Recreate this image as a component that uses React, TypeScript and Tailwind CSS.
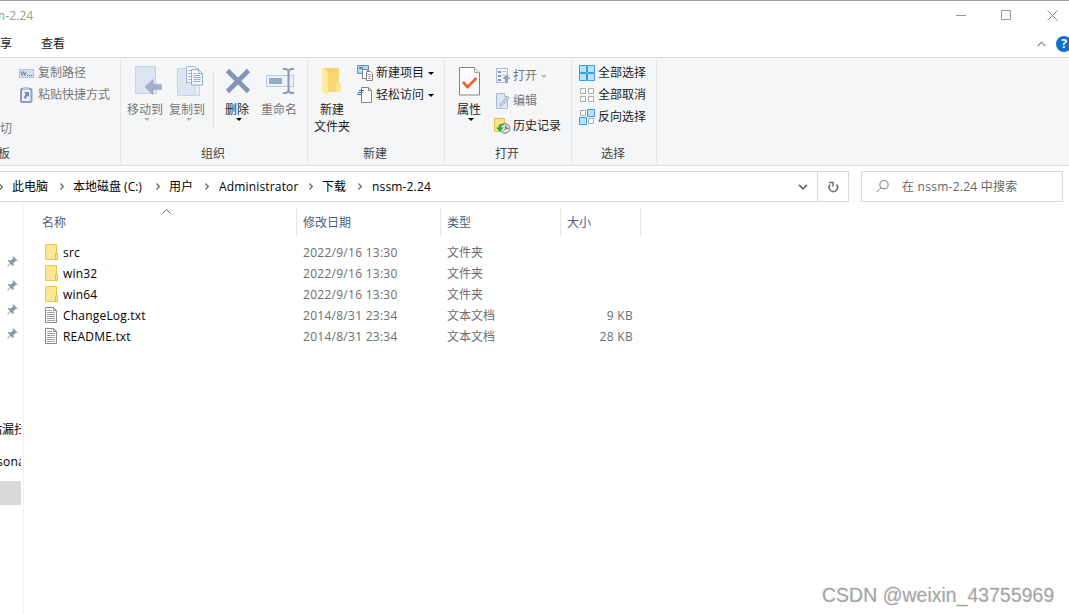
import React from 'react';

interface IconProps {
  className?: string;
}

const CRUMBS = [
  { label: '此电脑', width: 'w-[51px]' },
  { label: '本地磁盘 (C:)', width: 'w-[86px]' },
  { label: '用户', width: 'w-[39px]' },
  { label: 'Administrator', width: 'w-[94px]' },
  { label: '下载', width: 'w-[39px]' },
  { label: 'nssm-2.24', width: 'w-[70px]' },
];

const FILES = [
  { name: 'src', date: '2022/9/16 13:30', type: '文件夹', size: '', folder: true },
  { name: 'win32', date: '2022/9/16 13:30', type: '文件夹', size: '', folder: true },
  { name: 'win64', date: '2022/9/16 13:30', type: '文件夹', size: '', folder: true },
  { name: 'ChangeLog.txt', date: '2014/8/31 23:34', type: '文本文档', size: '9 KB', folder: false },
  { name: 'README.txt', date: '2014/8/31 23:34', type: '文本文档', size: '28 KB', folder: false },
];

const Arrow = ({ className = 'text-black' }: IconProps) => (
  <svg width="6" height="3" viewBox="0 0 6 3" className={className}>
    <path d="M0 0h6L3 3z" fill="currentColor" />
  </svg>
);

const CopyPathIcon = () => (
  <svg width="15" height="9" viewBox="0 0 15 9">
    <rect x=".5" y=".5" width="14" height="8" fill="#d5e0f0" stroke="#b3c3da" />
    <path d="M2 2.500l1.200 4 1.300-4 1.300 4 1.200-4" fill="none" stroke="#5c6f92" strokeWidth=".8" />
    <path d="M8 6h1v1H8zM10 6h1v1h-1zM12 6h1v1h-1z" fill="#5c6f92" />
  </svg>
);

const PasteShortcutIcon = () => (
  <svg width="14" height="16" viewBox="0 0 14 16">
    <rect x="2" y="2" width="10.500" height="13" rx="1" fill="#e9eff8" stroke="#8c9dbe" strokeWidth="2" />
    <path d="M4 0h6v3H4z" fill="#b9c6dc" />
    <path d="M5 5h5v5L8.400 8.400 6.500 12l-1.800-1L6.800 6.800z" fill="#7387ad" />
  </svg>
);

const MoveToIcon = () => (
  <svg width="27" height="30" viewBox="0 0 27 30">
    <path d="M.5.5h20v27H.5z" fill="#dce5f3" stroke="#c6d3e7" />
    <path d="M17.500 17h4v10.500h-4z" fill="#e5ecf7" stroke="#c6d3e7" />
    <path d="M10 21l8-7.500v5h8.500v5H18v5z" fill="#a1b0cc" stroke="#8fa0c0" strokeWidth=".6" />
  </svg>
);

const CopyToIcon = () => (
  <svg width="27" height="31" viewBox="0 0 27 31">
    <path d="M.5 2.500h21v27H.5z" fill="#dce5f3" stroke="#c6d3e7" />
    <path d="M18 18h4.500v11.500H18z" fill="#e5ecf7" stroke="#c6d3e7" />
    <path d="M9.500.5h8l3 3v13h-11z" fill="#f4f8fd" stroke="#a5b6d1" />
    <path d="M11 4.500h5M11 7.500h5M11 10.500h5M11 13.500h5" stroke="#a5b6d1" />
    <path d="M14.500 3.500h7l4 4v11.500h-11z" fill="#f4f8fd" stroke="#9aadcb" />
    <path d="M21.500 3.500v4h4" fill="none" stroke="#9aadcb" />
    <path d="M16.500 7.500h3M16.500 9.500h7M16.500 11.500h7M16.500 13.500h7M16.500 15.500h7" stroke="#9aadcb" />
  </svg>
);

const DeleteIcon = () => (
  <svg width="26" height="26" viewBox="0 0 26 26">
    <path d="M2.500 2.500l21 21M23.500 2.500l-21 21" stroke="#8394b5" strokeWidth="4.600" />
  </svg>
);

const RenameIcon = () => (
  <svg width="29" height="26" viewBox="0 0 29 26">
    <path d="M.5 7.500h27v11H.5z" fill="#edf3fb" stroke="#b7c7df" />
    <path d="M3 10h13v6H3z" fill="#99aac8" />
    <path d="M17 1h3l2.500 1.500L25 1h3M17 25h3l2.500-1.500L25 25h3M22.500 2v22" fill="none" stroke="#8799b9" strokeWidth="2" />
  </svg>
);

const NewFolderIcon = () => (
  <svg width="20" height="29" viewBox="0 0 20 29">
    <path d="M2 1h15v15h2v9H5z" fill="#f5d066" />
    <path d="M0 1h2l4 5v22.500L0 25z" fill="#ffe9a4" />
    <path d="M6 6l11-5v15l2 1v8H6z" fill="#f8d775" />
    <path d="M14 16h5v9h-5z" fill="#ffe398" />
  </svg>
);

const NewItemIcon = () => (
  <svg width="16" height="16" viewBox="0 0 16 16">
    <path d="M.5.5h11v8H.5z" fill="#b9dcf5" stroke="#6a8ba5" />
    <path d="M2 2h4v2H2z" fill="#4e88b8" />
    <path d="M5.500 4.500h5v9h-5z" fill="#fff" stroke="#858585" />
    <path d="M9.500 6.500h4l2 2v7h-6z" fill="#fff" stroke="#858585" />
    <path d="M11 9.500h3M11 11.500h3M11 13.500h3" stroke="#b19a9a" />
  </svg>
);

const EasyAccessIcon = () => (
  <svg width="16" height="16" viewBox="0 0 16 16">
    <path d="M4.500.5h7l3 3v12h-10z" fill="#fff" stroke="#858585" />
    <path d="M11.500.5v3h3" fill="none" stroke="#858585" />
    <path d="M2 3.500h5M1 5.500h5M0 7.500h4" stroke="#2f6d9f" />
  </svg>
);

const PropertiesIcon = () => (
  <svg width="22" height="29" viewBox="0 0 22 29">
    <path d="M.5.5h15l5 5v22.500H.5z" fill="#fcfcfc" stroke="#858585" />
    <path d="M15.500.5v5h5" fill="#eee" stroke="#a5a5a5" />
    <path d="M4 15l4.500 5L17.500 11" fill="none" stroke="#f16522" strokeWidth="2.700" />
  </svg>
);

const OpenIcon = () => (
  <svg width="15" height="16" viewBox="0 0 15 16">
    <path d="M.5.5h11v14H.5z" fill="#edf3fb" stroke="#a9bad5" />
    <path d="M2 3h3v2H2zM2 7h3v2H2zM2 11h3v2H2z" fill="#8699bd" />
    <path d="M6 3.500h4M6 7.500h3" stroke="#b4c3dc" />
    <path d="M10.500 6.500L14.500 11H12v4H9v-4H6.500z" fill="#8fa1c2" />
  </svg>
);

const EditIcon = () => (
  <svg width="15" height="16" viewBox="0 0 15 16">
    <path d="M1.500.5h8l3 3v12h-11z" fill="#dce7f5" stroke="#a9bad5" />
    <path d="M9.500.5v3h3" fill="#fff" stroke="#a9bad5" />
    <path d="M4.500 13.500l1-3 7-7 1.800 1.800-7 7z" fill="#c9d6e9" stroke="#98a9c6" strokeWidth=".8" />
  </svg>
);

const HistoryIcon = () => (
  <svg width="17" height="16" viewBox="0 0 17 16">
    <path d="M.5.5h10v13H.5z" fill="#ffe48c" stroke="#e5bf49" />
    <circle cx="11" cy="10.500" r="4.800" fill="#ddd" stroke="#777" />
    <path d="M11.500 7.500v3h3M9.500 12.500l4-4" fill="none" stroke="#666" strokeWidth=".8" />
    <path d="M10 5.500C6 5 4 7.500 4.500 9.500H2l3.800 4.500 3.700-4.500H7.300C7 8 8 7 10 7z" fill="#2eb135" />
  </svg>
);

const SelectAllIcon = () => (
  <svg width="16" height="16" viewBox="0 0 16 16" fill="#b9e2fc" stroke="#369ce5">
    <path d="M.5.5h7v7h-7zM8.500.5h7v7h-7zM.5 8.500h7v7h-7zM8.500 8.500h7v7h-7z" />
  </svg>
);

const SelectNoneIcon = () => (
  <svg width="16" height="16" viewBox="0 0 16 16" fill="#fff" stroke="#aaa">
    <path d="M1.500 1.500h5v5h-5zM9.500 1.500h5v5h-5zM1.500 9.500h5v5h-5zM9.500 9.500h5v5h-5z" />
  </svg>
);

const InvertIcon = () => (
  <svg width="16" height="16" viewBox="0 0 16 16">
    <path d="M1.500 1.500h5v5h-5zM9.500 9.500h5v5h-5z" fill="#fff" stroke="#aaa" />
    <path d="M8.500.5h7v7h-7zM.5 8.500h7v7h-7z" fill="#b9e2fc" stroke="#369ce5" />
  </svg>
);

const FolderIcon = () => (
  <svg width="13" height="16" viewBox="0 0 13 16">
    <path d="M.5.5h11v15H.5z" fill="#ffe694" stroke="#efc84a" />
    <path d="M10.500 9.500h2v6h-2z" fill="#ffe694" stroke="#e8bd3a" />
  </svg>
);

const TextFileIcon = () => (
  <svg width="13" height="16" viewBox="0 0 13 16">
    <path d="M.5.5h8l3 3v12H.5z" fill="#fff" stroke="#8b8b8b" />
    <path d="M8.500.5v3h3" fill="none" stroke="#8b8b8b" />
    <path d="M2 3.500h5M2 5.500h8M2 7.500h8M2 9.500h8M2 11.500h8M2 13.500h8" stroke="#a2a2a2" />
  </svg>
);

const PinIcon = () => (
  <svg width="11" height="11" viewBox="0 0 11 11">
    <path d="M6 0l4.500 4.500-1.200.8-.8-.3-2 2 .2 2.500-1 .5-2.200-2.200L1 10.500H.3V10l2.700-3L1 5l.6-1 2.500.2 2-2L5.500 1z" fill="#8a99a5" />
  </svg>
);

const Crumb = ({ label, width, last }: { label: string; width: string; last: boolean }) => (
  <div className={`flex shrink-0 items-center whitespace-nowrap ${last ? '' : 'mr-[10px]'} ${width}`}>
    <span className={/^[a-z]/i.test(label) ? 'tracking-[0.16px]' : '-ml-px'}>{label}</span>
    {!last && (
      <svg width="4" height="7" viewBox="0 0 4 7" className="ml-auto">
        <path d="M.5.5l2.800 3-2.800 3" fill="none" stroke="#6d6d6d" strokeWidth="1.300" />
      </svg>
    )}
  </div>
);

const RibbonGroup: React.FC<{ label: string; className: string; children: React.ReactNode }> = ({ label, className, children }) => (
  <div className={`flex h-[103px] shrink-0 flex-col border-r border-[#e2e3e4] ${className}`}>
    <div className="flex h-[85px] items-start">{children}</div>
    <div className="pr-0.5 text-center leading-[18px] text-[#444]">{label}</div>
  </div>
);

const BigButton: React.FC<{
  icon: React.ReactNode;
  label: string;
  className: string;
  iconClass?: string;
  arrow?: string;
}> = ({ icon, label, className, iconClass = '', arrow }) => (
  <div className={`flex shrink-0 flex-col items-center ${className}`}>
    <div className={`flex h-[36px] items-center pt-1.5 ${iconClass}`}>{icon}</div>
    <div className="mt-[5px] h-[17px] whitespace-nowrap leading-[18px]">{label}</div>
    {arrow && <Arrow className={`ml-[4px] ${arrow}`} />}
  </div>
);

const SmallButton: React.FC<{
  icon: React.ReactNode;
  label: string;
  className?: string;
  arrow?: string;
}> = ({ icon, label, className = '', arrow }) => (
  <div className={`flex h-[22px] items-center whitespace-nowrap ${className}`}>
    <span className="flex w-[19px] shrink-0 items-center">{icon}</span>
    <span>{label}</span>
    {arrow && <Arrow className={`ml-[4px] ${arrow}`} />}
  </div>
);

const Ribbon = () => (
  <div className="flex h-[109px] border-y border-[#dadbdc] bg-[#f5f6f7] pt-0.5 text-[#1e1e1e]">
    <div className="flex h-[103px] w-[121px] shrink-0 flex-col border-r border-[#e2e3e4]">
      <div className="pl-[19px] pt-0.5 text-[#777]">
        <SmallButton icon={<CopyPathIcon />} label="复制路径" />
        <SmallButton icon={<PasteShortcutIcon />} label="粘贴快捷方式" />
      </div>
      <div className="mt-[14px] leading-[18px] text-[#777]">切</div>
      <div className="-ml-0.5 mt-[7px] leading-[18px] text-[#444]">板</div>
    </div>

    <RibbonGroup label="组织" className="w-[187px]">
      <BigButton icon={<MoveToIcon />} label="移动到" className="w-12 text-[#777]" iconClass="pl-[6px]" arrow="text-[#b5b5b5]" />
      <BigButton icon={<CopyToIcon />} label="复制到" className="-ml-1.5 w-12 text-[#777]" iconClass="pl-[6px]" arrow="text-[#b5b5b5]" />
      <div className="ml-0.5 mt-3 h-14 w-px bg-[#e0e1e2]" />
      <BigButton icon={<DeleteIcon />} label="删除" className="-ml-px w-12" iconClass="pl-px" arrow="text-black" />
      <BigButton icon={<RenameIcon />} label="重命名" className="-ml-1.5 w-12 text-[#777]" iconClass="pl-0.5" />
    </RibbonGroup>

    <RibbonGroup label="新建" className="w-[137px]">
      <div className="w-12 shrink-0">
        <BigButton icon={<NewFolderIcon />} label="新建" className="w-12" />
        <div className="text-center leading-[17px]">文件夹</div>
      </div>
      <div className="ml-px pt-0.5">
        <SmallButton icon={<NewItemIcon />} label="新建项目" arrow="text-black" />
        <SmallButton icon={<EasyAccessIcon />} label="轻松访问" arrow="text-black" />
      </div>
    </RibbonGroup>

    <RibbonGroup label="打开" className="w-[127px]">
      <BigButton icon={<PropertiesIcon />} label="属性" className="w-12" iconClass="pl-px" arrow="text-black" />
      <div className="ml-px flex flex-col gap-[3px] pt-[5px]">
        <SmallButton icon={<span className="pl-0.5"><OpenIcon /></span>} label="打开" className="text-[#777]" arrow="text-[#b5b5b5]" />
        <SmallButton icon={<span className="pl-px"><EditIcon /></span>} label="编辑" className="text-[#777]" />
        <SmallButton icon={<HistoryIcon />} label="历史记录" />
      </div>
    </RibbonGroup>

    <RibbonGroup label="选择" className="w-[85px]">
      <div className="pl-[7px] pt-0.5">
        <SmallButton icon={<SelectAllIcon />} label="全部选择" />
        <SmallButton icon={<SelectNoneIcon />} label="全部取消" />
        <SmallButton icon={<InvertIcon />} label="反向选择" />
      </div>
    </RibbonGroup>
  </div>
);

const AddressBar = () => (
  <div className="flex h-[36px] pt-[5px] pr-1.5 text-black">
    <div className="flex h-[31px] w-[849px] items-center border border-l-0 border-[#d9d9d9]">
      <svg width="3" height="6" viewBox="0 0 3 6" className="mr-[10px]">
        <path d="M0 .5L2.300 3 0 5.500" fill="none" stroke="#6d6d6d" strokeWidth="1.300" />
      </svg>
      <div className="flex">
        {CRUMBS.map((crumb, i) => (
          <Crumb key={crumb.label} {...crumb} last={i === CRUMBS.length - 1} />
        ))}
      </div>
      <svg width="10" height="6" viewBox="0 0 10 6" className="ml-auto mr-[9px]">
        <path d="M1 .8l4 4 4-4" fill="none" stroke="#666" strokeWidth="1.700" />
      </svg>
      <div className="flex h-full w-[31px] items-center justify-center border-l border-[#d9d9d9]">
        <svg width="12" height="12" viewBox="0 0 12 12">
          <path d="M9.500 3.500A4.200 4.200 0 1 1 3 3.800" fill="none" stroke="#707070" strokeWidth="1.600" />
          <path d="M2 1.500h4v4" fill="none" stroke="#707070" strokeWidth="1.500" />
        </svg>
      </div>
    </div>
    <div className="ml-3 flex h-[31px] w-[202px] items-center border border-[#d9d9d9] pl-[14px] text-[#666]">
      <svg width="13" height="13" viewBox="0 0 13 13" className="mr-[13px]">
        <circle cx="8" cy="4.700" r="4.100" fill="none" stroke="#777" />
        <path d="M5 7.800L.5 12.300" stroke="#777" />
      </svg>
      <span className="whitespace-nowrap tracking-[0.25px]">在 nssm-2.24 中搜索</span>
    </div>
  </div>
);

const Sidebar = () => (
  <div className="mt-[3px] w-6 shrink-0 border-r border-[#f2f2f2]">
    <div className="-ml-px flex flex-col gap-[13px] pl-2 pt-[51px]">
      {[0, 1, 2, 3].map((pin) => (
        <PinIcon key={pin} />
      ))}
    </div>
    <div className="mt-[81px] w-[21px] overflow-hidden text-black">
      <div className="-ml-[10px] whitespace-nowrap leading-5">站漏扫</div>
      <div className="-ml-[3px] mt-3 whitespace-nowrap leading-5 tracking-[0.25px]">sonal</div>
    </div>
    <div className="mt-[9px] h-6 w-[21px] bg-[#d9d9d9]" />
  </div>
);

const FileList = () => (
  <div className="flex-1">
    <div className="mt-[7px] flex h-[27px] leading-[28px] text-[#4c607a]">
      <div className="flex w-[273px] border-r border-[#e5e5e5] pl-[18px]">
        <span className="w-[120px]">名称</span>
        <svg width="9" height="5" viewBox="0 0 9 5">
          <path d="M.5 4.500l4-4 4 4" fill="none" stroke="#666" />
        </svg>
      </div>
      <div className="w-36 border-r border-[#e5e5e5] pl-1.5">修改日期</div>
      <div className="w-30 border-r border-[#e5e5e5] pl-1.5">类型</div>
      <div className="w-20 border-r border-[#e5e5e5] pl-1.5">大小</div>
    </div>
    <div className="mt-[6px] text-[#6d6d6d]">
      {FILES.map((file) => (
        <div key={file.name} className="flex h-[21px] items-center whitespace-nowrap pl-[21px]">
          <span className="w-[18px] pb-px">{file.folder ? <FolderIcon /> : <TextFileIcon />}</span>
          <span className="w-[240px] tracking-[0.2px] text-black">{file.name}</span>
          <span className="w-36 tracking-[0.27px]">{file.date}</span>
          <span className="w-30">{file.type}</span>
          <span className="w-[66px] text-right tracking-[0.3px]">{file.size}</span>
        </div>
      ))}
    </div>
  </div>
);

const App: React.FC = () => {
  return (
    <div className="relative flex h-[614px] w-[1069px] flex-col overflow-hidden border-t border-[#a3a3a3] bg-white font-['Open_Sans','Noto_Sans_CJK_SC',sans-serif] text-[12px] [&_svg]:block [&_svg]:shrink-0">
      <div className="flex h-[29px] items-center justify-between text-[#999]">
        <span className="-ml-[6px] tracking-[0.1px]">m-2.24</span>
        <div className="flex items-center gap-[35px] pr-[11px]">
          <svg width="10" height="11" viewBox="0 0 10 11">
            <path d="M0 5.500h10" stroke="#999" />
          </svg>
          <svg width="11" height="11" viewBox="0 0 11 11">
            <path d="M.5.5h9v9h-9z" fill="none" stroke="#999" />
          </svg>
          <svg width="11" height="11" viewBox="0 0 11 11">
            <path d="M.5.5l10 10M10.500.5l-10 10" stroke="#888" />
          </svg>
        </div>
      </div>
      <div className="flex h-[27px] items-center text-[#222]">
        <span>享</span>
        <span className="ml-[29px]">查看</span>
        <svg width="9" height="6" viewBox="0 0 9 6" className="ml-auto mr-[10px]">
          <path d="M.7 5l3.800-3.800L8.300 5" fill="none" stroke="#999" strokeWidth="1.300" />
        </svg>
        <div className="-mr-[3px] flex size-4 items-center justify-center rounded-full bg-[#0f6fc9] font-bold leading-4 text-white">?</div>
      </div>
      <Ribbon />
      <AddressBar />
      <div className="flex flex-1">
        <Sidebar />
        <FileList />
      </div>
      <div className="absolute left-[822px] top-[582px] whitespace-nowrap font-['Liberation_Sans',sans-serif] text-[19.5px] leading-6 text-[#a3a3a3] [text-shadow:-1px_-1px_0_#ececec]">
        CSDN @weixin_43755969
      </div>
    </div>
  );
};

export default App;
